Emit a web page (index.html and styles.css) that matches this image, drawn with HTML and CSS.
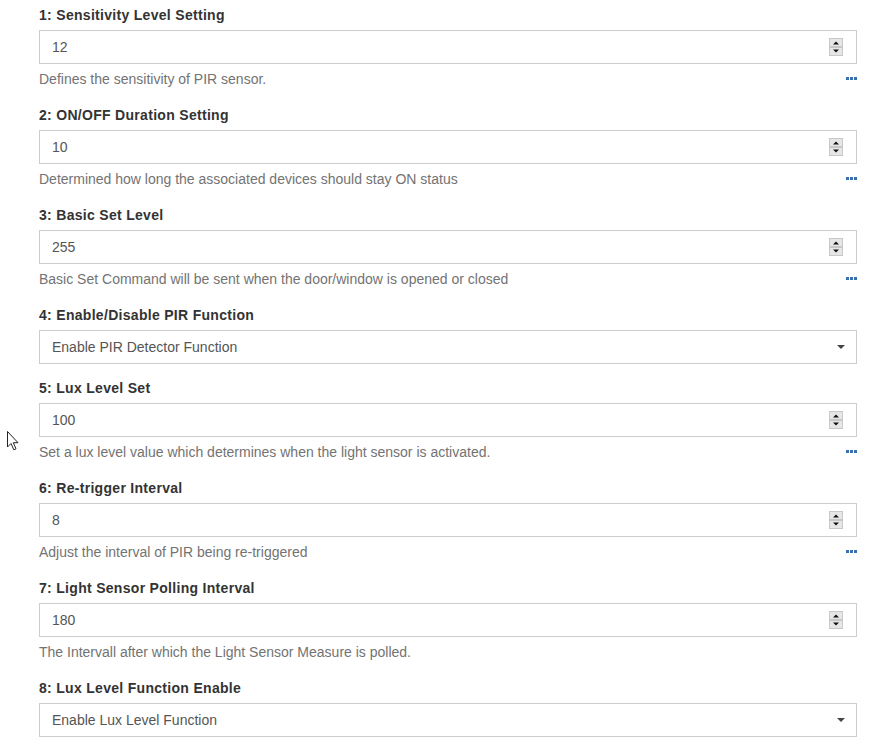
FILE: index.html
```html
<!DOCTYPE html>
<html>
<head>
<meta charset="utf-8">
<link rel="stylesheet" href="styles.css">
</head>
<body>
<div class="page">
  <div class="group">
    <div class="label">1: Sensitivity Level Setting</div>
    <div class="control"><span>12</span><span class="spin"><svg width="14" height="18" viewBox="0 0 14 18"><rect x="0.5" y="0.5" width="13" height="17" fill="#e6e6e6" stroke="#c8c8c8"/><line x1="1" y1="9" x2="13" y2="9" stroke="#a8a8a8"/><path d="M4 6.5 L7 3.5 L10 6.5 Z" fill="#111"/><path d="M4 11.5 L10 11.5 L7 14.5 Z" fill="#111"/></svg></span></div>
    <div class="help"><span>Defines the sensitivity of PIR sensor.</span><span class="dots"><i></i><i></i><i></i></span></div>
  </div>
  <div class="group">
    <div class="label">2: ON/OFF Duration Setting</div>
    <div class="control"><span>10</span><span class="spin"><svg width="14" height="18" viewBox="0 0 14 18"><rect x="0.5" y="0.5" width="13" height="17" fill="#e6e6e6" stroke="#c8c8c8"/><line x1="1" y1="9" x2="13" y2="9" stroke="#a8a8a8"/><path d="M4 6.5 L7 3.5 L10 6.5 Z" fill="#111"/><path d="M4 11.5 L10 11.5 L7 14.5 Z" fill="#111"/></svg></span></div>
    <div class="help"><span>Determined how long the associated devices should stay ON status</span><span class="dots"><i></i><i></i><i></i></span></div>
  </div>
  <div class="group">
    <div class="label">3: Basic Set Level</div>
    <div class="control"><span>255</span><span class="spin"><svg width="14" height="18" viewBox="0 0 14 18"><rect x="0.5" y="0.5" width="13" height="17" fill="#e6e6e6" stroke="#c8c8c8"/><line x1="1" y1="9" x2="13" y2="9" stroke="#a8a8a8"/><path d="M4 6.5 L7 3.5 L10 6.5 Z" fill="#111"/><path d="M4 11.5 L10 11.5 L7 14.5 Z" fill="#111"/></svg></span></div>
    <div class="help"><span>Basic Set Command will be sent when the door/window is opened or closed</span><span class="dots"><i></i><i></i><i></i></span></div>
  </div>
  <div class="group select-group">
    <div class="label">4: Enable/Disable PIR Function</div>
    <div class="control"><span>Enable PIR Detector Function</span><span class="caret"></span></div>
  </div>
  <div class="group">
    <div class="label">5: Lux Level Set</div>
    <div class="control"><span>100</span><span class="spin"><svg width="14" height="18" viewBox="0 0 14 18"><rect x="0.5" y="0.5" width="13" height="17" fill="#e6e6e6" stroke="#c8c8c8"/><line x1="1" y1="9" x2="13" y2="9" stroke="#a8a8a8"/><path d="M4 6.5 L7 3.5 L10 6.5 Z" fill="#111"/><path d="M4 11.5 L10 11.5 L7 14.5 Z" fill="#111"/></svg></span></div>
    <div class="help"><span>Set a lux level value which determines when the light sensor is activated.</span><span class="dots"><i></i><i></i><i></i></span></div>
  </div>
  <div class="group">
    <div class="label">6: Re-trigger Interval</div>
    <div class="control"><span>8</span><span class="spin"><svg width="14" height="18" viewBox="0 0 14 18"><rect x="0.5" y="0.5" width="13" height="17" fill="#e6e6e6" stroke="#c8c8c8"/><line x1="1" y1="9" x2="13" y2="9" stroke="#a8a8a8"/><path d="M4 6.5 L7 3.5 L10 6.5 Z" fill="#111"/><path d="M4 11.5 L10 11.5 L7 14.5 Z" fill="#111"/></svg></span></div>
    <div class="help"><span>Adjust the interval of PIR being re-triggered</span><span class="dots"><i></i><i></i><i></i></span></div>
  </div>
  <div class="group">
    <div class="label">7: Light Sensor Polling Interval</div>
    <div class="control"><span>180</span><span class="spin"><svg width="14" height="18" viewBox="0 0 14 18"><rect x="0.5" y="0.5" width="13" height="17" fill="#e6e6e6" stroke="#c8c8c8"/><line x1="1" y1="9" x2="13" y2="9" stroke="#a8a8a8"/><path d="M4 6.5 L7 3.5 L10 6.5 Z" fill="#111"/><path d="M4 11.5 L10 11.5 L7 14.5 Z" fill="#111"/></svg></span></div>
    <div class="help"><span>The Intervall after which the Light Sensor Measure is polled.</span></div>
  </div>
  <div class="group select-group">
    <div class="label">8: Lux Level Function Enable</div>
    <div class="control"><span>Enable Lux Level Function</span><span class="caret"></span></div>
  </div>
</div>
<svg class="cursor" width="12" height="20" viewBox="0 0 12 20"><path d="M0.5 0.5 L0.5 16 L4 12.5 L6.8 18.8 L9 17.8 L6.3 11.7 L11 11.7 Z" fill="#fff" stroke="#222" stroke-width="1" stroke-linejoin="round"/></svg>
</body>
</html>
```

FILE: styles.css
```css
html, body {
  margin: 0;
  padding: 0;
  background: #fff;
}
body {
  position: relative;
  font-family: "Liberation Sans", Arial, sans-serif;
  font-size: 14px;
  line-height: 20px;
  color: #333;
}
.page {
  padding: 5px 30px 0 39px;
}
.group {
  margin-bottom: 16px;
}
.select-group {
  margin-bottom: 14px;
}
.label {
  font-weight: bold;
  height: 20px;
  margin-bottom: 5px;
  letter-spacing: 0.3px;
}
.control {
  height: 34px;
  box-sizing: border-box;
  border: 1px solid #ccc;
  padding: 0 12px;
  display: flex;
  align-items: center;
  justify-content: space-between;
  color: #555;
}
.spin {
  display: flex;
  margin-right: 1px;
}
.spin svg {
  display: block;
}
.caret {
  width: 0;
  height: 0;
  border-left: 4px solid transparent;
  border-right: 4px solid transparent;
  border-top: 4px solid #444;
  margin-right: -1px;
}
.help {
  margin-top: 5px;
  height: 20px;
  display: flex;
  justify-content: space-between;
  align-items: center;
  color: #737373;
}
.dots {
  display: flex;
  gap: 1px;
  margin-top: -2px;
}
.dots i {
  width: 3px;
  height: 3px;
  background: #3a70b0;
}
.cursor {
  position: absolute;
  left: 7px;
  top: 431px;
}
```
